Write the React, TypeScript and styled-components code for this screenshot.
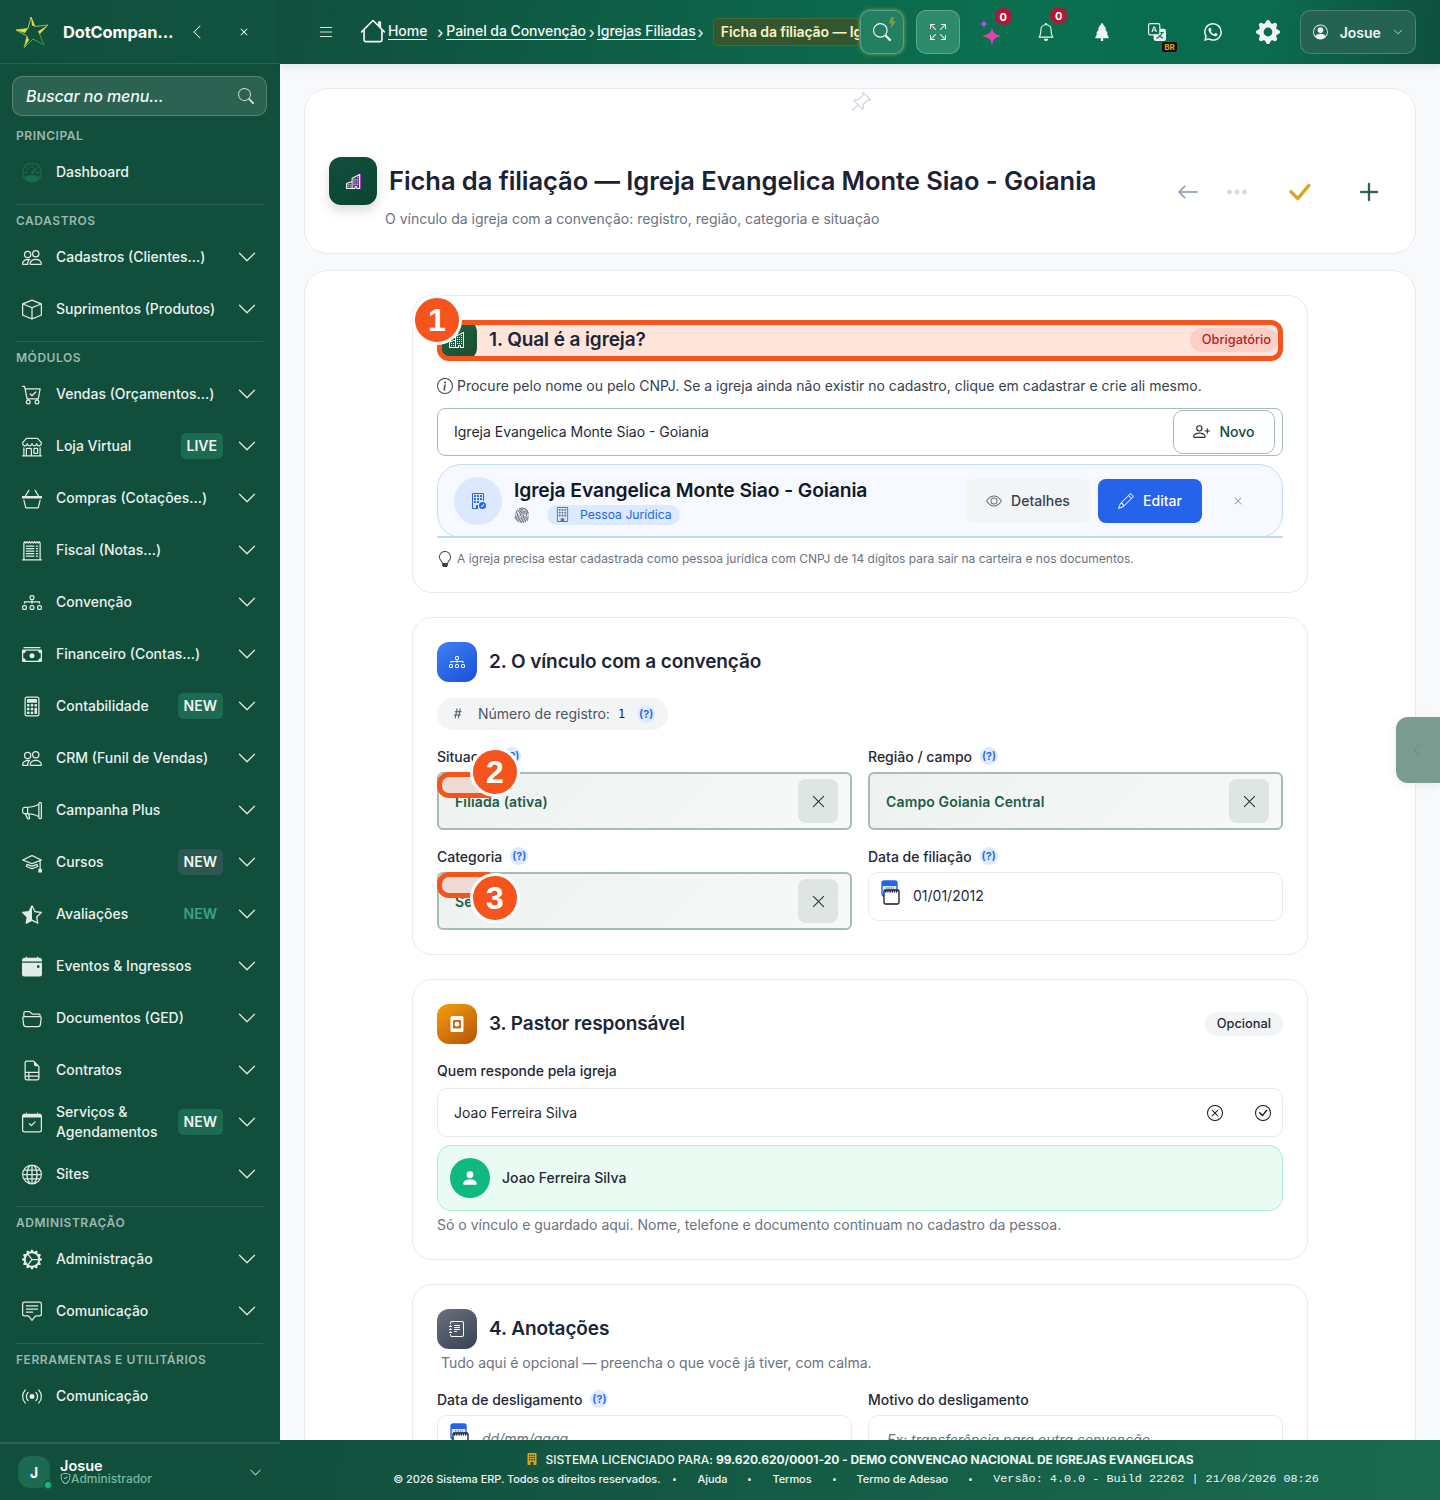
import React from "react";
import styled, { createGlobalStyle } from "styled-components";
import {
  BsPeople, BsBox, BsCartCheck, BsShop, BsBasket3, BsReceiptCutoff, BsDiagram3, BsCashStack, BsCalculator,
  BsMegaphone, BsMortarboard, BsStarHalf, BsCalendarEventFill, BsFolder2Open, BsFileEarmarkRuled, BsCalendarCheck,
  BsGlobe, BsGearWideConnected, BsChatSquareText, BsBroadcast, BsSpeedometer, BsChevronDown, BsChevronLeft, BsSearch,
  BsList, BsHouse, BsArrowsFullscreen, BsBell, BsTreeFill, BsTranslate, BsWhatsapp, BsGearFill, BsPersonCircle,
  BsPinAngle, BsBuildings, BsBuilding, BsBuildingCheck, BsBuildingFill, BsArrowLeft, BsThreeDots, BsCheckLg, BsPlusLg,
  BsInfoCircle, BsPersonPlus, BsFingerprint, BsEye, BsPencil, BsX, BsLightbulb, BsHash, BsXCircle, BsCheckCircle,
  BsPersonFill, BsShieldCheck, BsJournalText, BsXLg, BsLightningFill,
} from "react-icons/bs";

const Global = createGlobalStyle`
  html, body { margin: 0; padding: 0; background: #f8f9fb; }
  body { font-family: Inter, "Liberation Sans", sans-serif; color: #111827; }
  * { box-sizing: border-box; }
`;
const heading = `Inter, "Noto Sans", sans-serif`;

const Shell = styled.div`display: flex; width: 1440px; height: 1500px; overflow: hidden; position: relative;`;

/* ---------- sidebar ---------- */
const Side = styled.aside`width: 280px; flex: none; height: 100%; background: #114e3c; display: flex; flex-direction: column; color: #e8f0ed;`;
const Brand = styled.div`height: 64px; flex: none; display: flex; align-items: center; padding: 0 0 0 12px; border-bottom: 1px solid rgba(255,255,255,.1);
  background: linear-gradient(100deg, #124f3d, #10533f);`;
const BrandName = styled.div`font-family: ${heading}; font-weight: 700; font-size: 16.4px; letter-spacing: -.1px; color: #fff; margin-left: 11px; width: 122px; white-space: nowrap;`;
const BrandBtn = styled.span<{ $w: number }>`display: flex; justify-content: center; width: ${p => p.$w}px; color: #e8f0ed;`;
const SearchBox = styled.div`margin: 12px 13px 0 12px; height: 40px; flex: none; border-radius: 10px; border: 1px solid rgba(255,255,255,.2); background: #2c6251; display: flex; align-items: center; justify-content: space-between; padding: 0 12px 0 13px;
  font-style: italic; font-weight: 500; letter-spacing: -.1px; font-size: 16px; color: #f1f6f4; svg { color: #c9d8d3; }`;
const Nav = styled.nav`flex: 1; padding-top: 11px;`;
const Group = styled.div<{ $line?: boolean }>`${p => p.$line ? `border-top: 1px solid rgba(255,255,255,.12); margin: 6px 17px 0 16px; padding-top: 7px;` : `margin: 0 17px 0 16px;`}`;
const GroupLabel = styled.div`height: 16px; line-height: 18px; font-size: 12px; font-weight: 600; letter-spacing: .55px; color: #9db8ae; margin-bottom: 3px; white-space: nowrap;`;
const Item = styled.div`height: 52px; margin: 0 -17px 0 -16px; padding: 0 23px 0 22px; display: flex; align-items: center; gap: 14px; font-size: 14px; font-weight: 500; line-height: 20px; color: #eaf1ee;`;
const ItemIcon = styled.span<{ $dim?: boolean }>`width: 20px; height: 21px; flex: none; display: flex; font-size: 21px; color: ${p => p.$dim ? "#1c6a50" : "#e3ebe8"};`;
const ItemText = styled.span`flex: 1;`;
const Tag = styled.span<{ $kind: "green" | "grey" | "dim" }>`height: 26px; padding: 0 6px; border-radius: 5px; font-size: 14px; font-weight: 600; line-height: 26px;
  background: ${p => p.$kind === "green" ? "#1c6a52" : p.$kind === "grey" ? "#2d5650" : "#134f3f"};
  color: ${p => p.$kind === "dim" ? "#3f9f84" : "#edf5f1"};`;
const Chev = styled.span`display: flex; font-size: 20px; color: #dfe9e5; flex: none;`;
const UserFoot = styled.div`height: 58px; flex: none; border-top: 2px solid #2a6351; display: flex; align-items: center; padding: 0 18px 0 18px; gap: 10px;`;
const Avatar = styled.div`width: 32px; height: 32px; border-radius: 12px; background: #1b6a51; position: relative; display: flex; align-items: center; justify-content: center; color: #fff; font-weight: 700; font-size: 14px;`;
const Online = styled.span`position: absolute; right: -3px; bottom: -2px; width: 10px; height: 10px; border-radius: 50%; background: #10b981; border: 2px solid #145a45;`;
const UserInfo = styled.div`flex: 1; display: flex; flex-direction: column;`;
const UserName = styled.div`font-size: 14.5px; font-weight: 600; line-height: 13px; color: #fff;`;
const UserRole = styled.div`font-size: 12px; font-weight: 500; line-height: 13px; color: #74b8a0; display: flex; align-items: center; svg { color: #cfe2da; }`;

/* ---------- main ---------- */
const Main = styled.div`flex: 1; min-width: 0; display: flex; flex-direction: column; height: 100%;`;
const Top = styled.header`height: 64px; flex: none; background: linear-gradient(100deg, #114f3d 0%, #0b6f50 62%, #0a6b4e 85%, #0f4f3c 100%); display: flex; align-items: center; padding: 0 24px 0 37px; box-shadow: 0 2px 8px rgba(0,0,0,.1); z-index: 2; color: #eef5f2;`;
const Crumbs = styled.div`display: flex; align-items: center; font-size: 14px; font-weight: 500; color: #f2f7f5; margin-left: 25px; flex: none; white-space: nowrap;`;
const HomeLink = styled.span`display: flex; margin-right: 2px; margin-bottom: 2px;`;
const CrumbLink = styled.span`border-bottom: 1.5px solid #f2f7f5; line-height: 16px; letter-spacing: -.05px; margin-bottom: 1px;`;
const CrumbSep = styled.span<{ $w: number; $r: number }>`width: ${p => p.$w}px; text-align: right; color: #d7e5e0; font-size: 16px; padding-right: ${p => p.$r}px;`;
const ActiveCrumb = styled.span`width: 147px; height: 28px; margin-left: 8px; overflow: hidden; background: #33562e; border: 1px solid #46683a; border-radius: 4px; padding-left: 7px; line-height: 25px; font-size: 14px; font-weight: 600; color: #fbf2c8; white-space: nowrap; letter-spacing: -.1px;`;
const SquareBtn = styled.button<{ $glow?: boolean; $ml?: number }>`width: 44px; height: 44px; flex: none; padding: 0; margin-left: ${p => p.$ml ?? 0}px; border-radius: 10px; border: 1px solid rgba(255,255,255,.25); background: #2d8a6b; color: #f2f7f5; display: flex; align-items: center; justify-content: center; position: relative; font-size: 18px;
  ${p => p.$glow ? "box-shadow: 0 0 4px rgba(220,210,90,.55); background: #237f62;" : ""}`;
const Bolt = styled.span`position: absolute; top: 6px; right: 5px; display: flex; font-size: 11px; color: #7f9a3a;`;
const TopCell = styled.span<{ $size?: number; $ml?: number }>`width: 55.5px; flex: none; margin-left: ${p => p.$ml ?? 0}px; display: flex; justify-content: center; align-items: center; position: relative; height: 44px; font-size: ${p => p.$size ?? 18}px; color: #eef5f2;`;
const Count = styled.span<{ $top: number }>`position: absolute; top: ${p => p.$top}px; left: 32px; width: 17px; height: 17px; border-radius: 50%; background: #b4163b; color: #fff; font-size: 11px; font-weight: 700; display: flex; align-items: center; justify-content: center;`;
const BR = styled.span`position: absolute; left: 33px; top: 32px; background: #111; color: #d9a520; font-size: 8px; font-weight: 700; line-height: 10px; padding: 0 2px; border-radius: 2px;`;
const UserBtn = styled.div`width: 116px; height: 44px; margin-left: 4px; flex: none; border-radius: 10px; border: 1px solid rgba(255,255,255,.2); background: #246351; display: flex; align-items: center; padding: 0 12px; gap: 12px; font-size: 14px; font-weight: 600; color: #eef5f2;`;
const Content = styled.main`flex: 1; min-height: 0; overflow: hidden; padding: 24px 24px 0; background: #f8f9fb;`;

const TitleCard = styled.section`height: 166px; position: relative; background: #fff; border: 1px solid #e8ebef; border-radius: 24px; padding: 68px 28px 0 24px; display: flex; justify-content: space-between;`;
const Pin = styled.span`position: absolute; top: 2px; left: 545px; color: #cfd8e3; font-size: 22px; display: flex;`;
const TitleIcon = styled.div`width: 48px; height: 48px; border-radius: 12px; background: linear-gradient(160deg, #114f3d, #0c4433); box-shadow: 0 6px 12px rgba(0,0,0,.14); display: flex; align-items: center; justify-content: center; flex: none; font-size: 15px; color: #fff; svg { filter: drop-shadow(1px 0 0 #c026d3); }`;
const TitleBlock = styled.div`display: flex; flex-direction: column;`;
const TitleRow = styled.div`display: flex; align-items: center; gap: 12px; height: 48px;`;
const H1 = styled.h1`margin: 0 0 2px; font-family: ${heading}; font-size: 25.5px; font-weight: 600; letter-spacing: -.06px; color: #1a2233; white-space: nowrap;`;
const Sub = styled.div`font-size: 14px; color: #6b7280; margin: 4px 0 0 56px; line-height: 20px;`;
const Actions = styled.div`display: flex; align-items: center; height: 48px; margin-top: 11px;`;
const Act = styled.span<{ $c: string; $s: number; $w: number; $ml: number }>`width: ${p => p.$w}px; margin-left: ${p => p.$ml}px; display: flex; justify-content: center; color: ${p => p.$c}; font-size: ${p => p.$s}px; svg { stroke: currentColor; stroke-width: .4px; }`;

const Wizard = styled.section`margin-top: 16px; background: #fff; border: 1px solid #e8ebef; border-radius: 24px; padding: 24px 107px 0; height: 1400px;`;
const Panel = styled.section<{ $h: number }>`border: 1px solid #e8ebef; border-radius: 20px; padding: 24px; height: ${p => p.$h}px; margin-bottom: 24px; background: #fff;`;
const Head = styled.div<{ $mark?: boolean }>`height: 40px; display: flex; align-items: center; gap: 12px; position: relative; margin-bottom: 16px; border-radius: 12px;
  ${p => p.$mark ? `background: #fde5dc; &::after { content: ""; position: absolute; inset: 0 0 -1px 0; border: 5px solid #f5541d; border-radius: 12px; pointer-events: none; }` : ""}`;
const HeadIcon = styled.div<{ $from: string; $to: string }>`width: 40px; height: 40px; border-radius: 12px; background: linear-gradient(145deg, ${p => p.$from}, ${p => p.$to}); color: #fff; display: flex; align-items: center; justify-content: center; font-size: 16px; flex: none;`;
const H2 = styled.h2`margin: 0 0 1px; font-family: ${heading}; font-size: 19px; font-weight: 600; letter-spacing: -.1px; color: #1c2537; flex: 1;`;
const Pill = styled.span<{ $req?: boolean }>`font-size: 12.8px; font-weight: 500; line-height: 24px; height: 24px; padding: 0 12px; border-radius: 12px; background: ${p => p.$req ? "#fbcfc6" : "#f3f4f6"}; color: ${p => p.$req ? "#b91c1c" : "#1f2937"}; ${p => p.$req ? "margin-right: 5px; padding: 0 7px 0 12px;" : ""}`;
const Badge = styled.span<{ $x: number; $y: number }>`position: absolute; left: ${p => p.$x - 25}px; top: ${p => p.$y - 25}px; width: 50px; height: 50px; border-radius: 50%; background: #f5541d; border: 3px solid #fff; color: #fff; font-family: "Liberation Sans", sans-serif; font-weight: 700; font-size: 32px; display: flex; align-items: center; justify-content: center; z-index: 3;`;
const Info = styled.div`display: flex; align-items: center; gap: 4px; height: 20px; padding-bottom: 1px; font-size: 14px; color: #374151; margin-bottom: 12px;`;
const InputWrap = styled.div`height: 48px; border: 1px solid #a8bdb5; border-radius: 8px; display: flex; align-items: center; justify-content: space-between; padding: 0 7px 0 16px; font-size: 14px; color: #1f2937;`;
const InputText = styled.span`margin-bottom: 1px;`;
const Novo = styled.button`width: 102px; height: 44px; border: 1px solid #a8bdb5; border-radius: 10px; background: #fff; display: flex; align-items: center; justify-content: center; gap: 9px; font: 500 14px Inter, sans-serif; color: #0f4a45; padding: 0 0 1px; svg { color: #1f2937; }`;
const Church = styled.div`margin-top: 8px; height: 74px; position: relative; border: 1px solid #c5dcfb; border-radius: 24px; background: #f6f9ff; display: flex; align-items: center; padding: 0 36px 0 16px;
  &::after { content: ""; position: absolute; left: -1px; right: -1px; bottom: -1px; height: 2px; background: #bcd7f8; }`;
const ChurchAvatar = styled.div`width: 48px; height: 48px; border-radius: 50%; background: #dbe8fd; color: #2563eb; display: flex; align-items: center; justify-content: center; font-size: 16px; flex: none; margin-right: 12px;`;
const ChurchBody = styled.div`flex: 1; display: flex; flex-direction: column; gap: 3px;`;
const ChurchName = styled.div`font-family: ${heading}; font-size: 19.3px; font-weight: 600; letter-spacing: -.1px; line-height: 24px; color: #111827;`;
const ChurchMeta = styled.div`display: flex; align-items: center; height: 20px; color: #6b7280; font-size: 16px;`;
const KindPill = styled.span`margin-left: 17px; height: 20px; padding: 0 8px; border-radius: 10px; background: #dbeafe; display: flex; align-items: center; gap: 10px; color: #2563eb; font-size: 12.2px; svg { color: #6b7280; font-size: 15px; }`;
const Btn = styled.button<{ $primary?: boolean; $w: number }>`width: ${p => p.$w}px; height: 44px; border: 0; border-radius: 8px; padding: 0 0 1px; display: flex; align-items: center; justify-content: center; gap: 9px; font: 500 14px Inter, sans-serif;
  margin-left: ${p => p.$primary ? 8 : 0}px;
  background: ${p => p.$primary ? "#2563eb" : "#f3f4f6"}; color: ${p => p.$primary ? "#fff" : "#374151"}; svg { color: ${p => p.$primary ? "#dbe7ff" : "#6b7280"}; font-size: 16px; }`;
const ChurchClose = styled.span`margin-left: 28px; color: #9ca3af; font-size: 16px; display: flex;`;
const Note = styled.div`margin-top: 11px; display: flex; align-items: center; gap: 4px; font-size: 12px; color: #6b7280; line-height: 20px; svg { color: #374151; font-size: 16px; }`;
const RegPill = styled.div`width: 231px; height: 32px; border-radius: 16px; background: #f3f4f6; display: flex; align-items: center; padding: 0 0 1px 13px; font-size: 14px; color: #4b5563; margin-bottom: 16px; svg { font-size: 15px; margin-right: 13px; }`;
const RegValue = styled.span`font-family: "DejaVu Sans Mono", monospace; font-size: 12px; color: #1f2937; margin: 0 12px 0 8px;`;
const Help = styled.span`display: inline-flex; width: 18px; height: 18px; border-radius: 50%; background: #dbeafe; color: #2563eb; font-size: 11px; font-weight: 600; align-items: center; justify-content: center; flex: none;`;
const Grid = styled.div`display: grid; grid-template-columns: 415px 415px; column-gap: 16px; row-gap: 16px;`;
const Field = styled.div`position: relative;`;
const Label = styled.div<{ $mb?: number }>`height: 20px; margin-bottom: ${p => p.$mb ?? 6}px; display: flex; align-items: center; gap: 8px; font-size: 14px; font-weight: 500; color: #1f2937;`;
const Select = styled.div`height: 58px; border: 2px solid #a5bdb3; border-radius: 6px; background: linear-gradient(135deg, #edf2f0, #f7f9f8); display: flex; align-items: center; justify-content: space-between; padding: 0 12px 0 16px; font-size: 14px; font-weight: 600; letter-spacing: .14px; color: #1f5c47;`;
const Clear = styled.span`width: 40px; height: 44px; border-radius: 8px; background: #dfe5e2; color: #1f2937; display: flex; align-items: center; justify-content: center; font-size: 15px;`;
const Ghost = styled.span<{ $top: number }>`position: absolute; left: 0; top: ${p => p.$top}px; width: 62px; height: 26px; border: 5px solid #f5541d; border-radius: 12px; background: #eddad2; z-index: 2;`;
const DateBox = styled.div`height: 49px; border: 1px solid #e8ebf0; border-radius: 10px; display: flex; align-items: center; gap: 12px; padding: 0 0 8px 12px; font-size: 14px; color: #1f2937; background: #fff;`;
const DateValue = styled.span<{ $ph?: boolean }>`padding-top: 6px; ${p => p.$ph ? "font-style: italic; color: #6b7280;" : ""}`;
const PlainField = styled.div`height: 49px; border: 1px solid #e8ebf0; border-radius: 10px; display: flex; align-items: center; justify-content: space-between; padding: 0 11px 0 16px; font-size: 14px; color: #1f2937;`;
const PlainIcons = styled.span`display: flex; gap: 32px; font-size: 16px; color: #111827;`;
const Person = styled.div`margin-top: 8px; height: 66px; border: 1px solid #a7efcf; border-radius: 14px; background: #e9fbf3; display: flex; align-items: center; gap: 12px; padding-left: 12px; font-size: 14px; font-weight: 500; color: #1f2937;`;
const PersonName = styled.span`margin-bottom: 1px;`;
const PersonAvatar = styled.span`width: 40px; height: 40px; border-radius: 50%; background: #10b981; color: #fff; display: flex; align-items: center; justify-content: center; font-size: 18px;`;
const Hint = styled.div`margin-top: 4px; height: 20px; line-height: 20px; font-size: 14px; color: #6b7280;`;
const PanelSub = styled(Hint)`margin: -12px 0 16px 4px;`;
const TextArea = styled.div`height: 49px; border: 1px solid #e8ebf0; border-radius: 10px; padding: 15px 18px; font-size: 14px; font-style: italic; color: #6b7280;`;

const SideTab = styled.div`position: absolute; right: 0; top: 717px; width: 44px; height: 66px; border-radius: 12px 0 0 12px; background: #7b9c90; box-shadow: 0 2px 10px rgba(0,0,0,.08); color: #6d8a80; display: flex; align-items: center; padding-left: 14px; font-size: 14px; z-index: 4;`;

const Foot = styled.footer`height: 60px; flex: none; background: linear-gradient(100deg, #114f3d, #1a6b50); color: #eef5f2; display: flex; flex-direction: column; align-items: center; padding-top: 10px; z-index: 2;`;
const FootTop = styled.div`height: 18px; display: flex; align-items: center; gap: 7px; font-size: 12px; font-weight: 500; letter-spacing: -.05px; white-space: nowrap; b { font-weight: 700; } svg { color: #d9a520; }`;
const FootBottom = styled.div`height: 22px; margin-right: 8px; display: flex; align-items: center; font-size: 11px; font-weight: 500; letter-spacing: -.06px; white-space: nowrap;`;
const Dot = styled.span<{ $first?: boolean }>`width: 3px; height: 3px; border-radius: 50%; background: #eef5f2; margin: 0 21px 0 ${p => p.$first ? 13 : 21}px;`;
const Mono = styled.span`font-family: "Liberation Mono", monospace; font-size: 11.8px; letter-spacing: 0; font-weight: 400;`;

type Row = { label: React.ReactNode; icon: React.ReactNode; tag?: ["LIVE" | "NEW", "green" | "grey" | "dim"]; noChev?: boolean; dim?: boolean };
const groups: { title: string; items: Row[] }[] = [
  { title: "PRINCIPAL", items: [{ label: "Dashboard", icon: <BsSpeedometer />, noChev: true, dim: true }] },
  { title: "CADASTROS", items: [
    { label: "Cadastros (Clientes...)", icon: <BsPeople /> },
    { label: "Suprimentos (Produtos)", icon: <BsBox /> } ] },
  { title: "MÓDULOS", items: [
    { label: "Vendas (Orçamentos...)", icon: <BsCartCheck /> },
    { label: "Loja Virtual", icon: <BsShop />, tag: ["LIVE", "green"] },
    { label: "Compras (Cotações...)", icon: <BsBasket3 /> },
    { label: "Fiscal (Notas...)", icon: <BsReceiptCutoff /> },
    { label: "Convenção", icon: <BsDiagram3 /> },
    { label: "Financeiro (Contas...)", icon: <BsCashStack /> },
    { label: "Contabilidade", icon: <BsCalculator />, tag: ["NEW", "green"] },
    { label: "CRM (Funil de Vendas)", icon: <BsPeople /> },
    { label: "Campanha Plus", icon: <BsMegaphone /> },
    { label: "Cursos", icon: <BsMortarboard />, tag: ["NEW", "grey"] },
    { label: "Avaliações", icon: <BsStarHalf />, tag: ["NEW", "dim"] },
    { label: "Eventos & Ingressos", icon: <BsCalendarEventFill /> },
    { label: "Documentos (GED)", icon: <BsFolder2Open /> },
    { label: "Contratos", icon: <BsFileEarmarkRuled /> },
    { label: <>Serviços &amp;<br />Agendamentos</>, icon: <BsCalendarCheck />, tag: ["NEW", "green"] },
    { label: "Sites", icon: <BsGlobe /> } ] },
  { title: "ADMINISTRAÇÃO", items: [
    { label: "Administração", icon: <BsGearWideConnected /> },
    { label: "Comunicação", icon: <BsChatSquareText /> } ] },
  { title: "FERRAMENTAS E UTILITÁRIOS", items: [{ label: "Comunicação", icon: <BsBroadcast />, noChev: true }] },
];

const Logo = () => (
  <svg width="40" height="40" viewBox="0 0 40 40" aria-hidden="true">
    <defs>
      <linearGradient id="lg" x1="0.2" y1="0" x2="0.6" y2="1">
        <stop offset="0" stopColor="#e5e04a" />
        <stop offset="1" stopColor="#2f8f3f" />
      </linearGradient>
    </defs>
    <path d="M19 5 L23 14.5 L36 13 L27.5 22 L32 33 L21 27 L12 36 L15 24 L4 18 L16 16.5 Z" fill="none" stroke="url(#lg)" strokeWidth="1" />
    <path d="M19 5 L23 14.5 L20 13.5 Z M36 13 L27.5 22 L26 19.5 Z M4 18 L16 16.5 L13 21 Z M12 36 L15 24 L17 28 Z" fill="#dcdc46" />
  </svg>
);

const Sparkles = () => (
  <svg width="24" height="30" viewBox="0 0 24 30" aria-hidden="true">
    <path d="M13 10 C14 16 15 17 22 19 C15 21 14 22 13 29 C12 22 11 21 3 19 C11 17 12 16 13 10Z" fill="#e83fb0" />
    <path d="M5 2 C5.5 5 6 6 9 7 C6 8 5.5 9 5 12 C4.5 9 4 8 1 7 C4 6 4.5 5 5 2Z" fill="#b04fe0" />
  </svg>
);

const CalendarMark = () => (
  <svg width="20" height="26" viewBox="0 0 20 26" aria-hidden="true">
    <rect x="1" y="1" width="15" height="15" rx="2" fill="#dbe8fd" stroke="#2563eb" strokeWidth="1.4" />
    <rect x="1" y="1" width="15" height="5" fill="#2563eb" />
    <rect x="3" y="10" width="15" height="14" rx="1.5" fill="#fff" stroke="#111827" strokeWidth="1.3" />
    <path d="M4 11.5h13" stroke="#111827" strokeWidth="2" strokeDasharray="1.4 .8" />
    <path d="M5 8h8" stroke="#2563eb" strokeWidth="1.2" strokeDasharray="1.4 1" />
  </svg>
);

const PastorMark = () => (
  <svg width="16" height="18" viewBox="0 0 16 18" aria-hidden="true">
    <rect x="1.5" y="1" width="13" height="16" rx="1.5" fill="#fff" />
    <rect x="4" y="5" width="8" height="8.5" rx="1" fill="#c76a10" />
    <circle cx="8" cy="9.2" r="2.4" fill="#fff" />
  </svg>
);

export default function App() {
  return (
    <Shell>
      <Global />
      <Side>
        <Brand>
          <Logo />
          <BrandName>DotCompan...</BrandName>
          <BrandBtn $w={24}><BsChevronLeft size={16} /></BrandBtn>
          <BrandBtn $w={70}><BsX size={16} /></BrandBtn>
        </Brand>
        <SearchBox>Buscar no menu...<BsSearch size={16} /></SearchBox>
        <Nav>
          {groups.map((g, i) => (
            <Group key={g.title} $line={i > 0}>
              <GroupLabel>{g.title}</GroupLabel>
              {g.items.map((it, j) => (
                <Item key={j}>
                  <ItemIcon $dim={it.dim}>{it.icon}</ItemIcon>
                  <ItemText>{it.label}</ItemText>
                  {it.tag && <Tag $kind={it.tag[1]}>{it.tag[0]}</Tag>}
                  {!it.noChev && <Chev><BsChevronDown /></Chev>}
                </Item>
              ))}
            </Group>
          ))}
        </Nav>
        <UserFoot>
          <Avatar>J<Online /></Avatar>
          <UserInfo>
            <UserName>Josue</UserName>
            <UserRole><BsShieldCheck size={11} />Administrador</UserRole>
          </UserInfo>
          <BsChevronDown size={13} color="#cfe2da" />
        </UserFoot>
      </Side>

      <Main>
        <Top>
          <BsList size={18} color="#d7e5e0" />
          <Crumbs>
            <HomeLink><BsHouse size={26} /></HomeLink>
            <CrumbLink>Home</CrumbLink>
            <CrumbSep $w={19} $r={3}>›</CrumbSep>
            <CrumbLink>Painel da Convenção</CrumbLink>
            <CrumbSep $w={11} $r={2}>›</CrumbSep>
            <CrumbLink>Igrejas Filiadas</CrumbLink>
            <CrumbSep $w={9} $r={1}>›</CrumbSep>
            <ActiveCrumb>Ficha da filiação — Igreja Evangelica Monte Siao - Goiania</ActiveCrumb>
          </Crumbs>
          <SquareBtn $glow><BsSearch /><Bolt><BsLightningFill /></Bolt></SquareBtn>
          <SquareBtn $ml={12}><BsArrowsFullscreen size={16} /></SquareBtn>
          <TopCell $ml={3}><Sparkles /><Count $top={-2}>0</Count></TopCell>
          <TopCell><BsBell /><Count $top={-3}>0</Count></TopCell>
          <TopCell><BsTreeFill /></TopCell>
          <TopCell><BsTranslate /><BR>BR</BR></TopCell>
          <TopCell><BsWhatsapp /></TopCell>
          <TopCell $size={24}><BsGearFill /></TopCell>
          <UserBtn><BsPersonCircle size={18} />Josue<BsChevronDown size={12} /></UserBtn>
        </Top>
        <Content>
          <TitleCard>
            <Pin><BsPinAngle /></Pin>
            <TitleBlock>
              <TitleRow>
                <TitleIcon><BsBuildings /></TitleIcon>
                <H1>Ficha da filiação — Igreja Evangelica Monte Siao - Goiania</H1>
              </TitleRow>
              <Sub>O vínculo da igreja com a convenção: registro, região, categoria e situação</Sub>
            </TitleBlock>
            <Actions>
              <Act $c="#94a3b8" $s={24} $w={22} $ml={0}><BsArrowLeft /></Act>
              <Act $c="#d5dbe3" $s={24} $w={26} $ml={25}><BsThreeDots /></Act>
              <Act $c="#dba520" $s={34} $w={30} $ml={34}><BsCheckLg /></Act>
              <Act $c="#114e3c" $s={24} $w={36} $ml={37}><BsPlusLg /></Act>
            </Actions>
          </TitleCard>

          <Wizard>
            <Panel $h={298}>
              <Head $mark>
                <Badge $x={0} $y={0}>1</Badge>
                <HeadIcon $from="#1f6b45" $to="#1d4a30"><BsBuildings /></HeadIcon>
                <H2>1. Qual é a igreja?</H2>
                <Pill $req>Obrigatório</Pill>
              </Head>
              <Info><BsInfoCircle size={16} />Procure pelo nome ou pelo CNPJ. Se a igreja ainda não existir no cadastro, clique em cadastrar e crie ali mesmo.</Info>
              <InputWrap>
                <InputText>Igreja Evangelica Monte Siao - Goiania</InputText>
                <Novo><BsPersonPlus size={17} />Novo</Novo>
              </InputWrap>
              <Church>
                <ChurchAvatar><BsBuildingCheck /></ChurchAvatar>
                <ChurchBody>
                  <ChurchName>Igreja Evangelica Monte Siao - Goiania</ChurchName>
                  <ChurchMeta>
                    <BsFingerprint />
                    <KindPill><BsBuilding />Pessoa Jurídica</KindPill>
                  </ChurchMeta>
                </ChurchBody>
                <Btn $w={124}><BsEye />Detalhes</Btn>
                <Btn $primary $w={104}><BsPencil />Editar</Btn>
                <ChurchClose><BsX /></ChurchClose>
              </Church>
              <Note><BsLightbulb />A igreja precisa estar cadastrada como pessoa jurídica com CNPJ de 14 dígitos para sair na carteira e nos documentos.</Note>
            </Panel>

            <Panel $h={338}>
              <Head>
                <HeadIcon $from="#3b82f6" $to="#1d4ed8"><BsDiagram3 /></HeadIcon>
                <H2>2. O vínculo com a convenção</H2>
              </Head>
              <RegPill><BsHash />Número de registro:<RegValue>1</RegValue><Help>(?)</Help></RegPill>
              <Grid>
                <Field>
                  <Label>Situação <Help>(?)</Help></Label>
                  <Ghost $top={26} />
                  <Badge $x={58} $y={26}>2</Badge>
                  <Select>Filiada (ativa)<Clear><BsXLg /></Clear></Select>
                </Field>
                <Field>
                  <Label>Região / campo <Help>(?)</Help></Label>
                  <Select>Campo Goiania Central<Clear><BsXLg /></Clear></Select>
                </Field>
                <Field>
                  <Label>Categoria <Help>(?)</Help></Label>
                  <Ghost $top={26} />
                  <Badge $x={58} $y={52}>3</Badge>
                  <Select>Sede<Clear><BsXLg /></Clear></Select>
                </Field>
                <Field>
                  <Label>Data de filiação <Help>(?)</Help></Label>
                  <DateBox><CalendarMark /><DateValue>01/01/2012</DateValue></DateBox>
                </Field>
              </Grid>
            </Panel>

            <Panel $h={281}>
              <Head>
                <HeadIcon $from="#f59e0b" $to="#b45309"><PastorMark /></HeadIcon>
                <H2>3. Pastor responsável</H2>
                <Pill>Opcional</Pill>
              </Head>
              <Label $mb={8}>Quem responde pela igreja</Label>
              <PlainField>
                <InputText>Joao Ferreira Silva</InputText>
                <PlainIcons><BsXCircle /><BsCheckCircle /></PlainIcons>
              </PlainField>
              <Person><PersonAvatar><BsPersonFill /></PersonAvatar><PersonName>Joao Ferreira Silva</PersonName></Person>
              <Hint>Só o vínculo e guardado aqui. Nome, telefone e documento continuam no cadastro da pessoa.</Hint>
            </Panel>

            <Panel $h={300}>
              <Head>
                <HeadIcon $from="#6b7280" $to="#374151"><BsJournalText /></HeadIcon>
                <H2>4. Anotações</H2>
              </Head>
              <PanelSub>Tudo aqui é opcional — preencha o que você já tiver, com calma.</PanelSub>
              <Grid>
                <Field>
                  <Label>Data de desligamento <Help>(?)</Help></Label>
                  <DateBox><CalendarMark /><DateValue $ph>dd/mm/aaaa</DateValue></DateBox>
                </Field>
                <Field>
                  <Label>Motivo do desligamento</Label>
                  <TextArea>Ex: transferência para outra convenção</TextArea>
                </Field>
              </Grid>
            </Panel>
          </Wizard>
        </Content>
        <Foot>
          <FootTop><BsBuildingFill size={12} /><span>SISTEMA LICENCIADO PARA: <b>99.620.620/0001-20 - DEMO CONVENCAO NACIONAL DE IGREJAS EVANGELICAS</b></span></FootTop>
          <FootBottom>
            © 2026 Sistema ERP. Todos os direitos reservados.<Dot $first />Ajuda<Dot />Termos<Dot />Termo de Adesao<Dot /><Mono>Versão: 4.0.0 - Build 22262 | 21/08/2026 08:26</Mono>
          </FootBottom>
        </Foot>
      </Main>
      <SideTab><BsChevronLeft /></SideTab>
    </Shell>
  );
}
